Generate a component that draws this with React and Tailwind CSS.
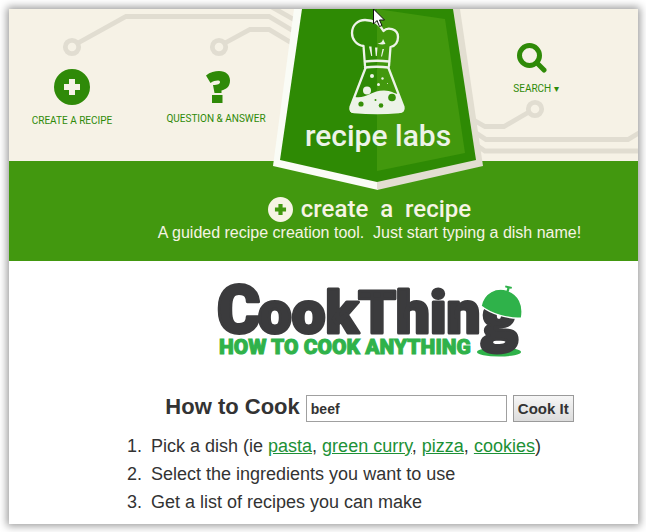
const NavItem = ({ icon, label }) => (
    <a href="#" className="flex flex-col items-center gap-2 text-[#2f8a08]">
        {icon}
        <span className="text-[10px] leading-4 whitespace-nowrap font-['Roboto',sans-serif]">{label}</span>
    </a>
);

const PlusDisc = ({ className }) => (
    <svg viewBox="0 0 36 36" className={className} aria-hidden="true">
        <path
            fill="currentColor"
            fillRule="evenodd"
            d="M18 0a18 18 0 1 0 0 36a18 18 0 1 0 0-36zM15 10h6v5h5v6h-5v5h-6v-5h-5v-6h5z"
        />
    </svg>
);

const QuestionIcon = () => (
    <svg viewBox="-3 0 27 32" className="w-[27px] h-8" aria-hidden="true">
        <path
            fill="currentColor"
            d="M0 4.500C4 1 9 0 13 0C20 0 24 4 24 9.500C24 16 20 18 15.500 19.500V22H8.500L7 14C12 14 14 12.800 14 11C14 9 9 9 4.500 12zM6 24h10.500v8H6z"
        />
    </svg>
);

const SearchIcon = () => (
    <svg viewBox="0 0 38 30" className="w-[38px] h-[30px]" fill="none" stroke="currentColor" aria-hidden="true">
        <circle cx="12.500" cy="12.500" r="10" strokeWidth="5" />
        <path d="M20 20l7 7" strokeWidth="5" strokeLinecap="round" />
    </svg>
);

// Circuit board traces behind the navigation.
const Circuits = () => (
    <svg
        viewBox="9 9 629 152"
        className="absolute inset-0 w-full h-full"
        preserveAspectRatio="xMidYMid slice"
        fill="none"
        stroke="#e1ddd1"
        strokeWidth="4.800"
        aria-hidden="true"
    >
        <circle cx="72" cy="47" r="6.700" />
        <path d="M78 43L126 16.500H269L300 35" />
        <circle cx="219" cy="47" r="6.700" />
        <path d="M225 43L250 29.500H269L300 48" />
        <path d="M270 6L300 23" />
        <circle cx="535" cy="109" r="6.700" />
        <path d="M529 112L504 126.500H485L470 118" />
        <path d="M470 129L486 139.500H628L644 130" />
        <path d="M470 141L485 151H644" />
    </svg>
);

const Flask = () => (
    <svg viewBox="348 16 60 100" className="absolute left-[75px] top-[7px] w-[60px] h-[100px]" aria-hidden="true">
        <g fill="none" stroke="#edf3e8" strokeWidth="2.300" strokeLinejoin="round" strokeLinecap="round">
            <path d="M365 66L363.500 46C356 45 352 39 352 33C352 25 358 20 365 20C373 20 380 24 383.500 31C387 27 398 28 398 37C398 43 395 46 390.500 47L389 66" />
            <path d="M365 61.500Q377 60 389 61.500M365 67.500Q377 66 388.500 67.500" />
            <path d="M365.500 68L350.500 107C350 110 351 112 354 112Q377 114 399 112C403 112 404 110 403.500 107L388.500 68" />
        </g>
        <path fill="#edf3e8" d="M355 97C366 99 371 90.500 384 90.500C391 90.500 394 93.500 398 94L404 109C404 112 402 113 399 113H354C351 113 349 111 350 108z" />
        <path fill="#edf3e8" d="M369 46.500l2.200 9.500h1l-.700-9.500zM375 47.500l.800 8.500h1l.7-8.500zM382.500 49l-1.500 7.500h1l2-7.500zM377.500 43.500q5-.5 5.500-4.500l2.500 5q-4 1-8-.5z" />
        <g fill="#edf3e8">
            <circle cx="372" cy="76" r="2" />
            <circle cx="382.500" cy="78.500" r="1.200" />
            <circle cx="387.500" cy="83.500" r=".5" />
            <circle cx="378.500" cy="84.500" r="1.500" />
            <circle cx="367" cy="90.500" r="4" />
        </g>
        <g fill="#369008">
            <circle cx="392" cy="97.500" r="3.800" />
            <circle cx="361" cy="104" r="2.600" />
            <circle cx="381" cy="105.500" r="2.300" />
            <circle cx="375.500" cy="100" r="1" />
        </g>
    </svg>
);

const Pointer = () => (
    <svg viewBox="0 0 13 20" className="absolute left-[100px] top-0 w-[13px] h-5" aria-hidden="true">
        <path d="M.500 0v15l3.500-3.500l2.500 6l2.500-1l-2.500-5.500h5z" fill="#fff" stroke="#111" />
    </svg>
);

const Badge = () => (
    <a href="#" className="relative z-10 block w-[210px] h-[182px] justify-self-center">
        <svg viewBox="273 9 210 182" className="absolute inset-0 w-full h-full" aria-hidden="true">
            <path fill="#fafcf6" d="M294 9H378V190L273 166z" />
            <path fill="#e2ded1" d="M377 9H460L483 166L377 190z" />
            <path fill="#2e8a04" d="M302 9H453L476 160L377 182L280 160z" />
            <path fill="#42980d" d="M377 9L445 19L465 153L377 171z" />
        </svg>
        <Flask />
        <Pointer />
        <span className="relative block pt-[109px] text-center text-[30px] leading-9 font-medium text-[#edf3e8] font-['Roboto',sans-serif]">
            recipe labs
        </span>
    </a>
);

const CookThingLogo = () => (
    <svg
        viewBox="216 283 308 76"
        className="w-[308px] h-[76px] overflow-visible"
        role="img"
        aria-label="CookThing, how to cook anything"
    >
        <ellipse cx="499" cy="352" rx="22" ry="4.500" fill="#2fb24a" />
        <g fill="#3b3b3d" stroke="#3b3b3d" strokeWidth="3" strokeLinejoin="round" fontWeight="900">
            <text x="217" y="333" fontSize="66" fontFamily="Roboto, sans-serif">C</text>
            <text x="258" y="333" fontSize="60" fontFamily="Roboto, sans-serif">ookThin</text>
            <text x="481" y="338" fontSize="62" fontFamily="Open Sans, sans-serif">g</text>
        </g>
        <text x="219" y="354" fontSize="21" fontWeight="900" fill="#2fb24a" stroke="#2fb24a" fontFamily="Roboto, sans-serif">
            HOW TO COOK ANYTHING
        </text>
        {/* serving dome tipped over the last letter */}
        <path
            d="M481 306C484 292 496 287 507 290C519 294 524 305 521.500 318C508 319 491 314 481 306z"
            fill="#2fb24a"
            stroke="#fff"
            strokeWidth="1.500"
        />
        <path d="M506.500 291l.8-3l-2.300-.8l.5-1.700l6.500 1.500l-.5 1.800l-2-.3l-.6 3z" fill="#2fb24a" />
    </svg>
);

const DishLink = ({ children }) => (
    <a href="#" className="text-[#1d9136] underline">{children}</a>
);

export default function App() {
    return (
        <div className="min-h-screen bg-white pt-[9px] pl-[9px] pr-2 pb-2 font-['Liberation_Sans',sans-serif] text-[#333]">
            <div className="overflow-hidden bg-white pb-2 shadow-[0_0_8px_2px_rgba(0,0,0,0.4)]">
                <header className="relative bg-[#f6f2e6]">
                    <Circuits />
                    <nav className="relative grid h-[152px] grid-cols-[minmax(0,126fr)_minmax(0,162fr)_minmax(0,162fr)_minmax(0,154fr)] items-start pr-[25px]">
                        <div className="pt-[60px]">
                            <NavItem icon={<PlusDisc className="w-9 h-9" />} label="CREATE A RECIPE" />
                        </div>
                        <div className="pt-[62px]">
                            <NavItem icon={<QuestionIcon />} label="QUESTION & ANSWER" />
                        </div>
                        <Badge />
                        <div className="pt-[34px]">
                            <NavItem icon={<SearchIcon />} label="SEARCH ▾" />
                        </div>
                    </nav>
                </header>

                <section className="h-[100px] bg-[#42980f] pt-8 pl-[92px] text-center text-[#f6f4e4]">
                    <h1 className="flex items-center justify-center gap-2 text-2xl leading-8 font-medium whitespace-pre font-['Roboto',sans-serif]">
                        <PlusDisc className="w-[25px] h-[25px]" />
                        create  a  recipe
                    </h1>
                    <p className="text-base leading-4 whitespace-pre">A guided recipe creation tool.  Just start typing a dish name!</p>
                </section>

                <main className="pl-[92px]">
                    <div className="flex justify-center pt-[22px]">
                        <CookThingLogo />
                    </div>
                    <form className="mt-9 flex items-start justify-center gap-1.5" onSubmit={(e) => e.preventDefault()}>
                        <label htmlFor="dish" className="text-[22px] leading-6 font-bold">How to Cook</label>
                        <input
                            id="dish"
                            defaultValue="beef"
                            className="w-[201px] h-[27px] border border-[#a0a0a0] bg-white px-1 text-sm font-bold outline-none"
                        />
                        <button className="h-[27px] border border-[#9a9a9a] bg-linear-to-b from-[#f6f6f6] to-[#dcdcdc] px-1 text-[15px] leading-6 font-bold">
                            Cook It
                        </button>
                    </form>
                    <ol className="mt-2.5 list-decimal pl-[46px] text-lg leading-7">
                        <li className="pl-1">
                            Pick a dish (ie <DishLink>pasta</DishLink>, <DishLink>green curry</DishLink>, <DishLink>pizza</DishLink>, <DishLink>cookies</DishLink>)
                        </li>
                        <li className="pl-1">Select the ingredients you want to use</li>
                        <li className="pl-1">Get a list of recipes you can make</li>
                    </ol>
                </main>
            </div>
        </div>
    );
}
